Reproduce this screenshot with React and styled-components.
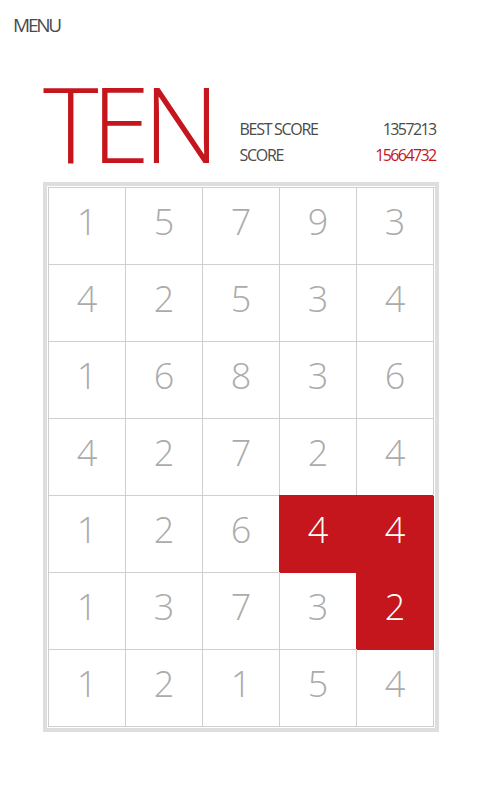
import React from "react";
import styled, { createGlobalStyle } from "styled-components";

const GlobalStyle = createGlobalStyle`
  html, body {
    margin: 0;
    padding: 0;
    background: #ffffff;
  }
  body {
    font-family: "Open Sans", "Liberation Sans", sans-serif;
  }
`;

const RED = "#c4161c";

const Page = styled.div`
  width: 480px;
  height: 800px;
  background: #fff;
  display: flex;
  flex-direction: column;
  overflow: hidden;
`;

const Menu = styled.div`
  padding: 14px 0 0 13px;
  font-size: 19px;
  line-height: 22px;
  letter-spacing: -2.2px;
  color: #4a4a4a;
`;

const TitleRow = styled.div`
  display: flex;
  align-items: flex-end;
  margin: 41px 0 0 43px;
  height: 90px;
`;

const Title = styled.h1`
  margin: 0;
  font-size: 106px;
  font-weight: 300;
  line-height: 90px;
  letter-spacing: -7px;
  color: ${RED};
`;

const Scores = styled.div`
  display: flex;
  flex-direction: column;
  gap: 6px;
  width: 196px;
  margin: 0 0 2px 27px;
`;

const ScoreRow = styled.div`
  display: flex;
  justify-content: space-between;
  font-size: 16px;
  line-height: 20px;
  letter-spacing: -1.3px;
  color: #4a4a4a;
`;

const ScoreValue = styled.span`
  color: ${(p) => (p.$current ? RED : "#4a4a4a")};
  letter-spacing: -1.6px;
`;

const Board = styled.div`
  margin: 15px 0 0 43px;
  width: 387px;
  border: 4px solid #dedede;
  padding: 1px 0 1px 1px;
  background: #fff;
`;

const Grid = styled.div`
  display: grid;
  grid-template-columns: repeat(5, 77px);
  grid-auto-rows: 77px;
  border-top: 1px solid #cfcfcf;
  border-left: 1px solid #cfcfcf;
`;

const Cell = styled.div`
  display: flex;
  align-items: center;
  justify-content: center;
  box-sizing: border-box;
  padding-bottom: 8px;
  border-right: 1px solid ${(p) => (p.$active ? RED : "#cfcfcf")};
  border-bottom: 1px solid ${(p) => (p.$active ? RED : "#cfcfcf")};
  background: ${(p) => (p.$active ? RED : "#fff")};
  box-shadow: ${(p) => (p.$active ? `-1px -1px 0 ${RED}` : "none")};
  color: ${(p) => (p.$active ? "#fff" : "#ababab")};
  font-family: "Open Sans", "Liberation Sans", sans-serif;
  font-weight: 300;
  font-size: 36px;
  line-height: 1;
`;

const board = [
  [1, 5, 7, 9, 3],
  [4, 2, 5, 3, 4],
  [1, 6, 8, 3, 6],
  [4, 2, 7, 2, 4],
  [1, 2, 6, 4, 4],
  [1, 3, 7, 3, 2],
  [1, 2, 1, 5, 4],
];

const selected = ["4-3", "4-4", "5-4"];

export default function App() {
  return (
    <>
      <GlobalStyle />
      <Page>
        <Menu>MENU</Menu>
        <TitleRow>
          <Title>TEN</Title>
          <Scores>
            <ScoreRow>
              <span>BEST SCORE</span>
              <ScoreValue>1357213</ScoreValue>
            </ScoreRow>
            <ScoreRow>
              <span>SCORE</span>
              <ScoreValue $current>15664732</ScoreValue>
            </ScoreRow>
          </Scores>
        </TitleRow>
        <Board>
          <Grid>
            {board.map((row, r) =>
              row.map((n, c) => (
                <Cell key={`${r}-${c}`} $active={selected.includes(`${r}-${c}`)}>
                  {n}
                </Cell>
              ))
            )}
          </Grid>
        </Board>
      </Page>
    </>
  );
}
